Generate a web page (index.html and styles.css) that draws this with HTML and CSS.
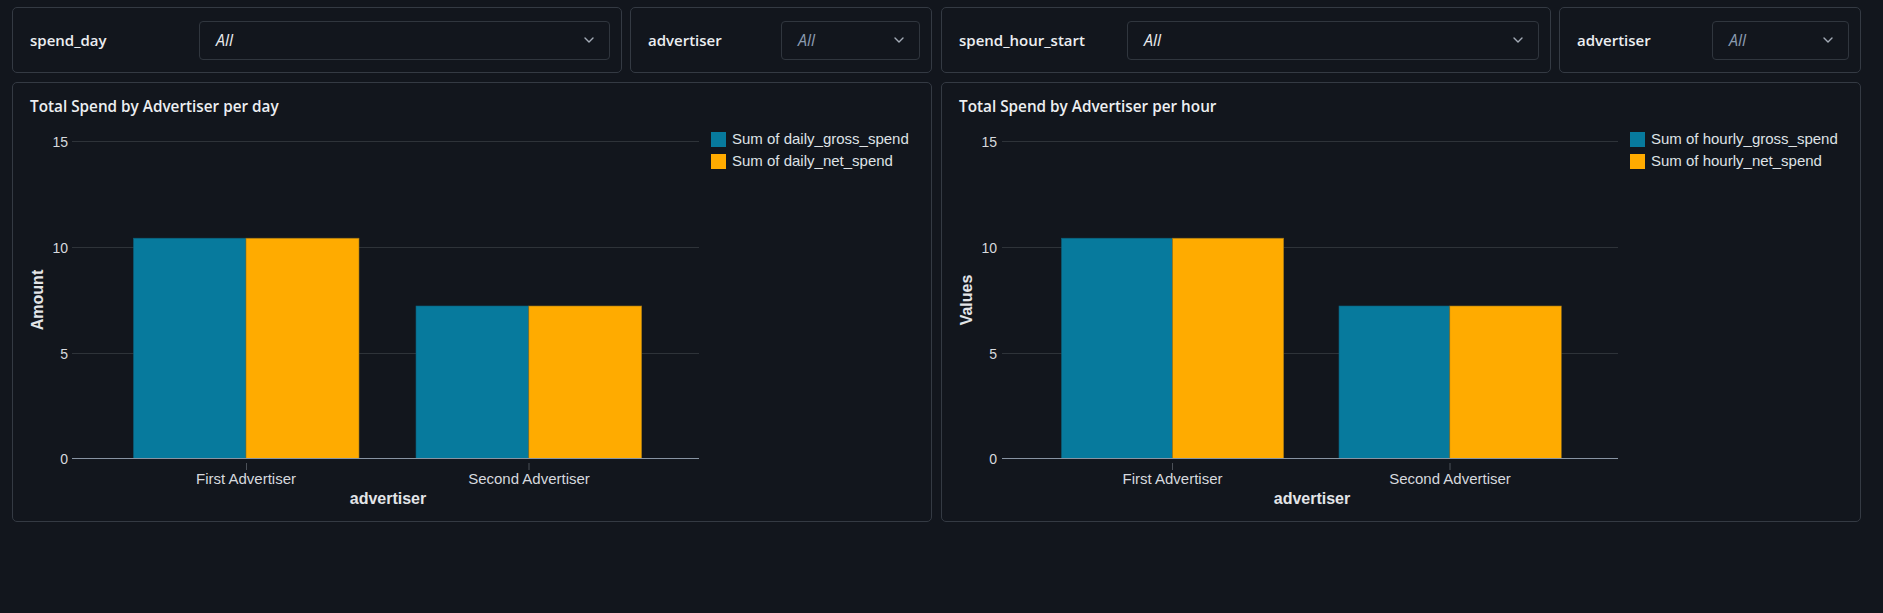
FILE: index.html
```html
<!DOCTYPE html>
<html lang="en">
<head>
<meta charset="utf-8">
<title>Dashboard</title>
<link rel="stylesheet" href="styles.css">
</head>
<body>
<div class="dashboard">
  <div class="col">
    <div class="filter-row">
      <div class="filter wide">
        <span class="filter-label">spend_day</span>
        <div class="select sel-1"><span class="sel-value">All</span><svg class="chev" viewBox="0 0 10 6" width="10" height="6"><path d="M1 1 L5 5 L9 1"/></svg></div>
      </div>
      <div class="filter narrow">
        <span class="filter-label">advertiser</span>
        <div class="select sel-2"><span class="sel-value placeholder">All</span><svg class="chev" viewBox="0 0 10 6" width="10" height="6"><path d="M1 1 L5 5 L9 1"/></svg></div>
      </div>
    </div>
    <div class="chart-card">
      <div class="chart-title">Total Spend by Advertiser per day</div>
      <svg class="chart" width="918" height="405" viewBox="0 0 918 405">
        <g class="grid">
          <line x1="59" x2="686" y1="25.5" y2="25.5"/>
          <line x1="59" x2="686" y1="131.5" y2="131.5"/>
          <line x1="59" x2="686" y1="237.5" y2="237.5"/>
        </g>
        <g class="ylabels">
          <text x="55" y="31">15</text>
          <text x="55" y="136.5">10</text>
          <text x="55" y="242.5">5</text>
          <text x="55" y="348">0</text>
        </g>
        <rect class="bar teal" x="120.5" y="122.2" width="112.5" height="220.3"/>
        <rect class="bar orange" x="233" y="122.2" width="113" height="220.3"/>
        <rect class="bar teal" x="403" y="190" width="112.8" height="152.5"/>
        <rect class="bar orange" x="515.8" y="190" width="112.9" height="152.5"/>
        <line class="zero" x1="59" x2="686" y1="342.5" y2="342.5"/>
        <g class="ticks">
          <line x1="233.5" x2="233.5" y1="347" y2="354"/>
          <line x1="516" x2="516" y1="347" y2="354"/>
        </g>
        <g class="xlabels">
          <text x="233" y="368">First Advertiser</text>
          <text x="516" y="368">Second Advertiser</text>
        </g>
        <text class="axis-title" x="375" y="388">advertiser</text>
        <text class="axis-title" transform="translate(30,184) rotate(-90)">Amount</text>
        <g class="legend">
          <rect class="teal" x="698" y="16" width="15" height="15"/>
          <text x="719" y="28">Sum of daily_gross_spend</text>
          <rect class="orange" x="698" y="38" width="15" height="15"/>
          <text x="719" y="50">Sum of daily_net_spend</text>
        </g>
      </svg>
    </div>
  </div>
  <div class="col">
    <div class="filter-row">
      <div class="filter wide">
        <span class="filter-label">spend_hour_start</span>
        <div class="select sel-3"><span class="sel-value">All</span><svg class="chev" viewBox="0 0 10 6" width="10" height="6"><path d="M1 1 L5 5 L9 1"/></svg></div>
      </div>
      <div class="filter narrow">
        <span class="filter-label">advertiser</span>
        <div class="select sel-4"><span class="sel-value placeholder">All</span><svg class="chev" viewBox="0 0 10 6" width="10" height="6"><path d="M1 1 L5 5 L9 1"/></svg></div>
      </div>
    </div>
    <div class="chart-card">
      <div class="chart-title">Total Spend by Advertiser per hour</div>
      <svg class="chart" width="918" height="405" viewBox="0 0 918 405">
        <g class="grid">
          <line x1="60" x2="676" y1="25.5" y2="25.5"/>
          <line x1="60" x2="676" y1="131.5" y2="131.5"/>
          <line x1="60" x2="676" y1="237.5" y2="237.5"/>
        </g>
        <g class="ylabels">
          <text x="55" y="31">15</text>
          <text x="55" y="136.5">10</text>
          <text x="55" y="242.5">5</text>
          <text x="55" y="348">0</text>
        </g>
        <rect class="bar teal" x="119.5" y="122.2" width="111" height="220.3"/>
        <rect class="bar orange" x="230.5" y="122.2" width="111.2" height="220.3"/>
        <rect class="bar teal" x="397" y="190" width="110.8" height="152.5"/>
        <rect class="bar orange" x="507.8" y="190" width="111.5" height="152.5"/>
        <line class="zero" x1="60" x2="676" y1="342.5" y2="342.5"/>
        <g class="ticks">
          <line x1="230.5" x2="230.5" y1="347" y2="354"/>
          <line x1="508" x2="508" y1="347" y2="354"/>
        </g>
        <g class="xlabels">
          <text x="230.5" y="368">First Advertiser</text>
          <text x="508" y="368">Second Advertiser</text>
        </g>
        <text class="axis-title" x="370" y="388">advertiser</text>
        <text class="axis-title" transform="translate(30,184) rotate(-90)">Values</text>
        <g class="legend">
          <rect class="teal" x="688" y="16" width="15" height="15"/>
          <text x="709" y="28">Sum of hourly_gross_spend</text>
          <rect class="orange" x="688" y="38" width="15" height="15"/>
          <text x="709" y="50">Sum of hourly_net_spend</text>
        </g>
      </svg>
    </div>
  </div>
</div>
</body>
</html>
```
FILE: styles.css
```css
html, body {
  margin: 0;
  padding: 0;
  background: #12161d;
}
body {
  font-family: "Open Sans", "Noto Sans", sans-serif;
  color: #e8eaed;
  width: 1883px;
  height: 613px;
  overflow: hidden;
}
.dashboard {
  display: grid;
  grid-template-columns: 920px 920px;
  column-gap: 9px;
  padding: 7px 12px 0 12px;
}
.col {
  display: flex;
  flex-direction: column;
  gap: 9px;
}
.filter-row {
  display: flex;
  gap: 8px;
}
.filter {
  box-sizing: border-box;
  height: 66px;
  border: 1px solid #343a43;
  border-radius: 5px;
  display: flex;
  align-items: center;
  padding: 0 11px 0 17px;
}
.filter.wide {
  width: 610px;
}
.filter.narrow {
  flex: 1;
}
.filter-label {
  flex: 1;
  font-size: 15px;
  font-weight: 600;
  color: #eceef1;
  white-space: nowrap;
}
.select {
  box-sizing: border-box;
  height: 39px;
  border: 1px solid #30363e;
  border-radius: 4px;
  display: flex;
  align-items: center;
  justify-content: space-between;
  padding: 0 15px 0 16px;
}
.sel-1 { width: 411px; }
.sel-2 { width: 139px; }
.sel-3 { width: 412px; }
.sel-4 { width: 137px; }
.sel-value {
  font-size: 16px;
  font-style: italic;
  color: #e8eaed;
}
.sel-value.placeholder {
  color: #8a9bb0;
}
.chev path {
  fill: none;
  stroke: #a3abb6;
  stroke-width: 1.4;
  stroke-linecap: round;
  stroke-linejoin: round;
}
.chart-card {
  box-sizing: border-box;
  height: 440px;
  border: 1px solid #343a43;
  border-radius: 5px;
}
.chart-title {
  padding: 13px 17px 0 17px;
  height: 20px;
  line-height: 20px;
  font-size: 15.3px;
  font-weight: 600;
  color: #eceef1;
}
.chart {
  display: block;
  font-family: "Liberation Sans", Arial, sans-serif;
}
.grid line {
  stroke: #2e3339;
  stroke-width: 1;
}
.zero {
  stroke: #8894a3;
  stroke-width: 1;
}
.ticks line {
  stroke: #4b5058;
  stroke-width: 1;
}
.ylabels text {
  font-size: 14px;
  fill: #d6d9de;
  text-anchor: end;
}
.xlabels text {
  font-size: 15px;
  fill: #d6d9de;
  text-anchor: middle;
}
.axis-title {
  font-size: 16px;
  font-weight: 700;
  fill: #e3e5e8;
  text-anchor: middle;
}
.legend text {
  font-size: 15px;
  fill: #dfe2e6;
}
.teal {
  fill: #077a9d;
}
.orange {
  fill: #ffab00;
}
.bar.teal {
  stroke: #0a5f7a;
  stroke-width: 0.6;
}
.bar.orange {
  stroke: #9c7416;
  stroke-width: 0.6;
}
```
